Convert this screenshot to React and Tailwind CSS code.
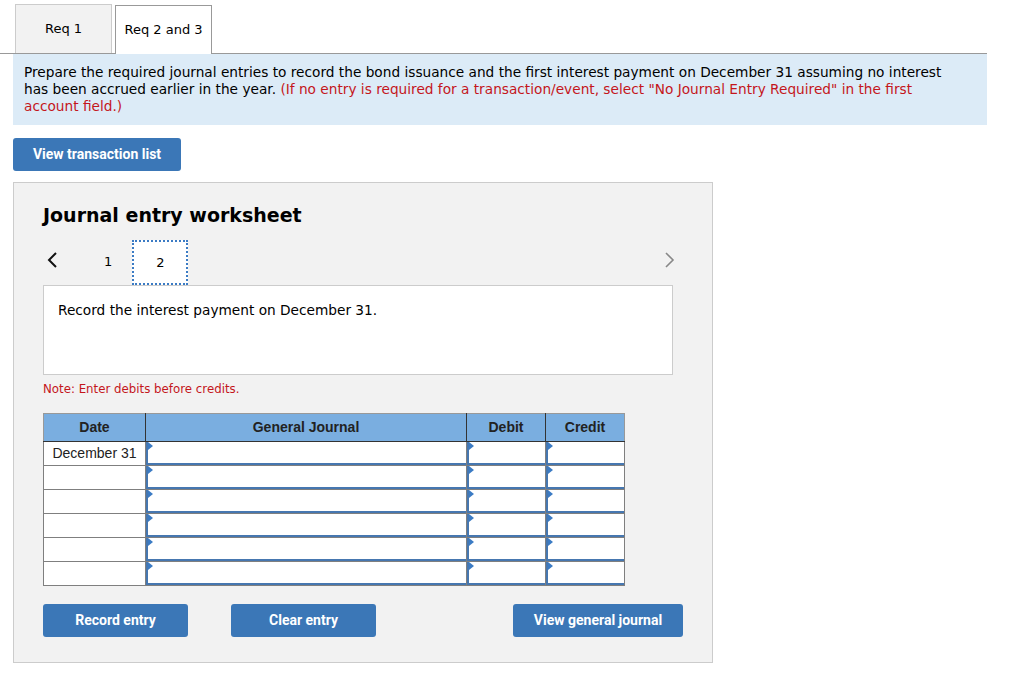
import React from 'react';

const body = { fontFamily: '"DejaVu Sans", Verdana, sans-serif' };
const arial = { fontFamily: '"Liberation Sans", Arial, sans-serif' };
const btn = { fontFamily: 'Roboto, "Liberation Sans", Arial, sans-serif' };

const rows = ['December 31', '', '', '', '', ''];

const Marker = () => (
    <span className="absolute left-0 top-0 w-0 h-0 border-y-[4px] border-y-transparent border-l-[5px] border-l-[#3b7bc4]"></span>
);

const InputCell = () => (
    <td className="p-0 border border-[#7f7f7f] bg-[#7f7f7f]">
        <div className="relative h-[23px] bg-white border-l-2 border-b-2 border-[#4677b0]">
            <Marker />
        </div>
    </td>
);

const Button = ({ children, className }) => (
    <button
        style={btn}
        className={`h-[33px] bg-[#3b77b7] text-white text-[14px] font-bold rounded-[3px] ${className}`}
    >
        {children}
    </button>
);

const App = () => {
    return (
        <div className="w-[1024px] h-[687px] bg-white text-black" style={body}>
            {/* Tabs */}
            <div className="flex pl-[15px] pt-[4px] w-[987px] border-b border-[#999]">
                <div className="w-[97px] h-[49px] flex items-center justify-center bg-[#f2f2f2] border border-b-0 border-[#ccc] text-[13px]">
                    Req 1
                </div>
                <div className="ml-[3px] w-[97px] h-[49px] flex items-center justify-center bg-white border border-b-0 border-[#999] text-[13px] relative top-[1px]">
                    Req 2 and 3
                </div>
            </div>

            {/* Instructions */}
            <div className="ml-[13px] w-[974px] bg-[#dcebf7] pl-[11px] pr-[28px] py-[10px] text-[13.7px] leading-[17px]">
                Prepare the required journal entries to record the bond issuance and the first interest payment on December 31 assuming no interest has been accrued earlier in the year.{' '}
                <span className="text-[#c4161c]">(If no entry is required for a transaction/event, select "No Journal Entry Required" in the first account field.)</span>
            </div>

            <div className="ml-[13px] mt-[13px]">
                <Button className="w-[168px]">View transaction list</Button>
            </div>

            {/* Worksheet */}
            <div className="ml-[13px] mt-[11px] w-[700px] h-[481px] bg-[#f2f2f2] border border-[#ccc] pl-[29px] pt-[23px]">
                <h2 className="text-[19px] font-bold leading-none">Journal entry worksheet</h2>

                <div className="flex items-end mt-[15px] h-[45px]">
                    <svg width="14" height="20" viewBox="0 0 14 20" className="ml-[3px] mb-[15px]">
                        <path d="M10 3 L3 10 L10 17" fill="none" stroke="#111" strokeWidth="2" />
                    </svg>
                    <span className="ml-[44px] mb-[14px] text-[13px]">1</span>
                    <div className="ml-[20px] w-[56px] h-[45px] bg-white border-2 border-dotted border-[#3b7bc4] flex items-center justify-center text-[13px]">
                        2
                    </div>
                    <svg width="14" height="20" viewBox="0 0 14 20" className="ml-[474px] mb-[15px]">
                        <path d="M4 3 L11 10 L4 17" fill="none" stroke="#888" strokeWidth="1.6" />
                    </svg>
                </div>

                <div className="w-[630px] h-[90px] bg-white border border-[#ccc] px-[14px] pt-[14px] text-[13.7px]">
                    Record the interest payment on December 31.
                </div>

                <p className="mt-[6px] text-[11.8px] text-[#c4161c]">Note: Enter debits before credits.</p>

                <table className="mt-[14px] border-collapse w-[582px]" style={arial}>
                    <thead>
                        <tr className="h-[28px] bg-[#7aaee0] text-[14px] font-bold text-[#222]">
                            <th className="w-[102px] border border-[#999] border-r-[#333] border-b-[#333] font-bold">Date</th>
                            <th className="w-[321px] border border-[#999] border-r-[#333] border-b-[#333] font-bold">General Journal</th>
                            <th className="w-[79px] border border-[#999] border-r-[#333] border-b-[#333] font-bold">Debit</th>
                            <th className="w-[79px] border border-[#999] border-b-[#333] font-bold">Credit</th>
                        </tr>
                    </thead>
                    <tbody>
                        {rows.map((d, i) => (
                            <tr key={i} className="h-[24px]">
                                <td className="border border-[#7f7f7f] bg-white text-[14px] text-center text-[#222] p-0">{d}</td>
                                <InputCell />
                                <InputCell />
                                <InputCell />
                            </tr>
                        ))}
                    </tbody>
                </table>

                <div className="flex mt-[18px]">
                    <Button className="w-[145px]">Record entry</Button>
                    <Button className="w-[145px] ml-[43px]">Clear entry</Button>
                    <Button className="w-[170px] ml-[137px]">View general journal</Button>
                </div>
            </div>
        </div>
    );
};

export default App;
